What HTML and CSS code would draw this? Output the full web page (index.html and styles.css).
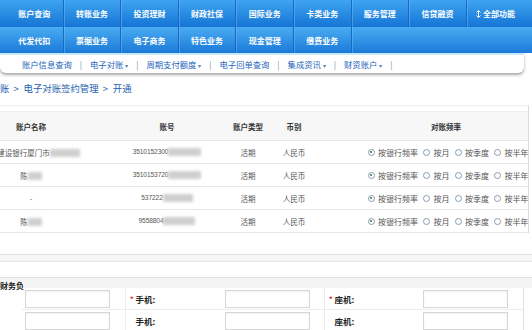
FILE: index.html
```html
<!DOCTYPE html>
<html>
<head>
    <title>电子对账签约管理</title>
    <link rel="stylesheet" href="styles.css">
</head>
<body>
    <div class="nav">
        <div class="nav-row top">
            <a class="tab">账户查询</a>
            <a class="tab">转账业务</a>
            <a class="tab">投资理财</a>
            <a class="tab">财政社保</a>
            <a class="tab">国际业务</a>
            <a class="tab">卡类业务</a>
            <a class="tab">服务管理</a>
            <a class="tab">信贷融资</a>
            <a class="tab last"><svg class="updown" width="5" height="8" viewBox="0 0 5 8"><path d="M2.5 0.5V7.5M0.5 2.5L2.5 0.5L4.5 2.5M0.5 5.5L2.5 7.5L4.5 5.5" fill="none" stroke="#fff" stroke-width="1"/></svg>全部功能</a>
        </div>
        <div class="nav-row bottom">
            <a class="tab">代发代扣</a>
            <a class="tab">票据业务</a>
            <a class="tab">电子商务</a>
            <a class="tab">特色业务</a>
            <a class="tab">现金管理</a>
            <a class="tab">缴费业务</a>
        </div>
    </div>

    <div class="subnav">
        <a>账户信息查询</a><span class="sep">|</span>
        <a>电子对账<i class="caret">▾</i></a><span class="sep">|</span>
        <a>周期支付额度<i class="caret">▾</i></a><span class="sep">|</span>
        <a>电子回单查询</a><span class="sep">|</span>
        <a>集成资讯<i class="caret">▾</i></a><span class="sep">|</span>
        <a>财资账户<i class="caret">▾</i></a><span class="sep">|</span>
    </div>

    <div class="crumb">账<span class="gt">&gt;</span>电子对账签约管理<span class="gt">&gt;</span>开通</div>

    <div class="panel">
        <table class="accounts">
            <colgroup>
                <col class="c-name"><col class="c-no"><col class="c-type"><col class="c-cur"><col class="c-freq">
            </colgroup>
            <thead>
                <tr><th>账户名称</th><th>账号</th><th>账户类型</th><th>币别</th><th>对账频率</th></tr>
            </thead>
            <tbody>
                <tr>
                    <td>中国建设银行厦门市<span class="blur" style="width:30px"></span></td>
                    <td class="num">3510152300<span class="blur" style="width:33px"></span></td>
                    <td>活期</td><td>人民币</td>
                    <td><div class="radios"><span class="radio on"></span>按银行频率<span class="radio"></span>按月<span class="radio"></span>按季度<span class="radio"></span>按半年</div></td>
                </tr>
                <tr>
                    <td>陈<span class="blur" style="width:14px"></span></td>
                    <td class="num">3510153720<span class="blur" style="width:33px"></span></td>
                    <td>活期</td><td>人民币</td>
                    <td><div class="radios"><span class="radio on"></span>按银行频率<span class="radio"></span>按月<span class="radio"></span>按季度<span class="radio"></span>按半年</div></td>
                </tr>
                <tr>
                    <td>-</td>
                    <td class="num">537222<span class="blur" style="width:30px"></span></td>
                    <td>活期</td><td>人民币</td>
                    <td><div class="radios"><span class="radio on"></span>按银行频率<span class="radio"></span>按月<span class="radio"></span>按季度<span class="radio"></span>按半年</div></td>
                </tr>
                <tr>
                    <td>陈<span class="blur" style="width:14px"></span></td>
                    <td class="num">9558804<span class="blur" style="width:32px"></span></td>
                    <td>活期</td><td>人民币</td>
                    <td><div class="radios"><span class="radio on"></span>按银行频率<span class="radio"></span>按月<span class="radio"></span>按季度<span class="radio"></span>按半年</div></td>
                </tr>
            </tbody>
        </table>
    </div>

    <div class="band-a"></div>
    <div class="band-b"></div>

    <div class="contact">
        <div class="who">财务负</div>
        <div class="cell"><input type="text"></div>
        <div class="lbl"><span class="star">*</span>手机:</div>
        <div class="cell"><input type="text"></div>
        <div class="lbl"><span class="star">*</span>座机:</div>
        <div class="cell end"><input type="text"></div>
        <div class="fill"></div>
        <div class="cell"><input type="text"></div>
        <div class="lbl"><span class="star blank">*</span>手机:</div>
        <div class="cell"><input type="text"></div>
        <div class="lbl"><span class="star blank">*</span>座机:</div>
        <div class="cell end"><input type="text"></div>
        <div class="fill"></div>
    </div>
</body>
</html>
```

FILE: styles.css
```css
body {
    margin: 0;
    width: 532px;
    height: 330px;
    overflow: hidden;
    background: #fff;
    font-family: "Noto Sans CJK SC", "Liberation Sans", sans-serif;
    color: #444;
}

/* top menu */
.nav-row {
    display: flex;
    padding-left: 6px;
    background: linear-gradient(#3ea4f0, #1575d5);
}
.nav-row.top { height: 27px; }
.nav-row.bottom {
    height: 26px;
    background: linear-gradient(#4aabf2, #1a7ad8);
}
.tab {
    width: 57.6px;
    box-sizing: border-box;
    border-right: 1px solid #1869c4;
    box-shadow: 1px 0 0 rgba(120, 190, 245, 0.45);
    color: #fff;
    font-weight: bold;
    font-size: 8px;
    display: flex;
    align-items: center;
    justify-content: center;
}
.tab.last { border-right: none; box-shadow: none; }
.updown { margin-right: 2px; }

.subnav {
    height: 18px;
    margin-right: 8px;
    border-top: 2px solid #c6e9fb;
    background: #fff;
    border-radius: 0 0 6px 6px;
    box-shadow: 0 2px 3px rgba(0, 0, 0, 0.35);
    display: flex;
    align-items: center;
    gap: 8px;
    padding-left: 22px;
    font-size: 8.3px;
    color: #2463bb;
}
.subnav .sep { color: #6f8fb5; }
.caret { font-style: normal; font-size: 6px; margin-left: 2px; color: #5a7fb0; }

.crumb {
    height: 22px;
    margin-top: 4px;
    line-height: 22px;
    font-size: 9.4px;
    color: #1f5fae;
}
.crumb .gt { margin: 0 5px 0 4px; }

/* account list */
.panel {
    margin-top: 6px;
    width: 528px;
    border-top: 1px solid #ececec;
    border-right: 1px solid #dcdcdc;
    padding-top: 5px;
    overflow: hidden;
}
.accounts {
    margin-left: -48px;
    width: 624px;
    table-layout: fixed;
    border-collapse: collapse;
    font-size: 7.5px;
    color: #555;
}
.c-name { width: 158px; }
.c-no { width: 114px; }
.c-type { width: 48px; }
.c-cur { width: 44px; }
.c-freq { width: 260px; }
.accounts th {
    height: 26px;
    background: #f7f7f7;
    border-top: 1px solid #eeeeee;
    color: #333;
    font-weight: bold;
    text-align: center;
}
.accounts td {
    height: 22px;
    border-top: 1px solid #e6e6e6;
    text-align: center;
    white-space: nowrap;
    padding: 0;
}
.accounts tbody tr:last-child td { border-bottom: 1px solid #e6e6e6; }
.accounts td.num { font-family: "Liberation Sans", sans-serif; font-size: 6.6px; letter-spacing: -0.1px; }
.blur {
    display: inline-block;
    height: 8px;
    vertical-align: middle;
    background: #cfcfcf;
    filter: blur(1.5px);
}
.radios {
    display: flex;
    align-items: center;
    justify-content: center;
    font-size: 8px;
    color: #555;
    padding-left: 4px;
}
.radio {
    width: 5px;
    height: 5px;
    border: 1px solid #8a9cb4;
    border-radius: 50%;
    margin: 0 3.5px 0 5px;
    display: flex;
    align-items: center;
    justify-content: center;
}
.radio:first-child { margin-left: 0; }
.radio.on::after {
    content: "";
    width: 2px;
    height: 2px;
    border-radius: 50%;
    background: #3d6b3d;
}

/* lower form */
.band-a {
    margin-top: 21px;
    height: 6px;
    border-top: 1px solid #e2e2e2;
    border-bottom: 1px solid #e6e6e6;
    background: #f6f6f6;
}
.band-b {
    margin-top: 15px;
    height: 10px;
    border-top: 1px solid #e0e0e0;
    background: #f4f4f4;
}
.contact {
    display: grid;
    grid-template-columns: 22px 103px 97px 102px 96px 104px 1fr;
    grid-auto-rows: 22px;
    font-size: 8.5px;
    color: #222;
}
.contact > div { border-bottom: 1px solid #ececec; box-sizing: border-box; }
.who {
    grid-row: span 2;
    font-size: 8px;
    font-weight: bold;
    margin-top: -8px;
    border-bottom: none !important;
    white-space: nowrap;
}
.cell { display: flex; align-items: center; padding-left: 3px; }
.cell.end { border-right: 1px solid #e0e0e0; }
.fill { border-bottom: none !important; }
.lbl {
    display: flex;
    align-items: center;
    padding-left: 4px;
    font-weight: bold;
    border-left: 1px solid #ececec;
}
.star { color: #c8102e; font-size: 7px; margin-right: 2px; }
.star.blank { visibility: hidden; }
input {
    width: 85px;
    height: 18px;
    box-sizing: border-box;
    border: 1px solid #d6d6d6;
    box-shadow: inset 0 1px 2px rgba(0, 0, 0, 0.06);
    margin: 0;
    padding: 0;
}
```
